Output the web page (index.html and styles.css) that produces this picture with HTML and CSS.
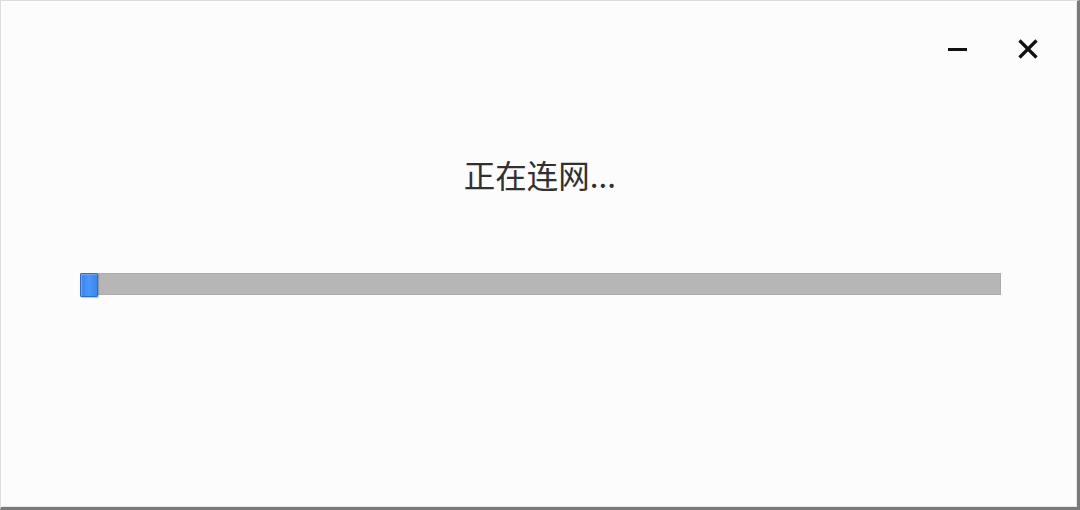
FILE: index.html
```html
<!DOCTYPE html>
<html lang="zh-CN">
<head>
<meta charset="utf-8">
<link rel="stylesheet" href="styles.css">
</head>
<body>
<div class="window">
  <div class="titlebar">
    <button class="tb-btn" aria-label="最小化">
      <svg width="22" height="22" viewBox="0 0 22 22"><path d="M2 11.5H21" stroke="#111" stroke-width="3"/></svg>
    </button>
    <button class="tb-btn" aria-label="关闭">
      <svg width="22" height="22" viewBox="0 0 22 22"><path d="M2.5 2.5L19.5 19.5M19.5 2.5L2.5 19.5" stroke="#111" stroke-width="3.2"/></svg>
    </button>
  </div>
  <div class="status">正在连网...</div>
  <div class="progress">
    <div class="chunk"></div>
  </div>
</div>
</body>
</html>
```
FILE: styles.css
```css
html, body {
  margin: 0;
  padding: 0;
  background: #fcfcfc;
}
.window {
  box-sizing: border-box;
  width: 1080px;
  height: 510px;
  background: #fcfcfc;
  border-top: 1px solid #dcdcdc;
  border-left: 1px solid #dcdcdc;
  border-right: 3px solid #7a7a7a;
  border-bottom: 3px solid #7a7a7a;
  box-shadow: inset 1px 1px 0 #ffffff, inset -1px -1px 0 #e6e6e6;
  display: flex;
  flex-direction: column;
  font-family: "Noto Sans CJK SC", "Microsoft YaHei", sans-serif;
}
.titlebar {
  display: flex;
  justify-content: flex-end;
  gap: 37px;
  padding: 37px 32px 0 0;
  height: 23px;
}
.tb-btn {
  width: 34px;
  height: 22px;
  padding: 0;
  border: 0;
  background: transparent;
  display: flex;
  align-items: center;
  justify-content: center;
}
.status {
  margin-top: 93px;
  text-align: center;
  font-size: 31.5px;
  line-height: 40px;
  color: #303030;
  padding-left: 2px;
}
.progress {
  margin: 79px 0 0 80px;
  width: 920px;
  height: 22px;
  box-sizing: border-box;
  background: #b6b6b6;
  border: 1px solid #acacac;
  position: relative;
}
.chunk {
  position: absolute;
  left: -2px;
  top: -1px;
  width: 18px;
  height: 24px;
  box-sizing: border-box;
  background: linear-gradient(to right, #3a86ee, #4a98fa 50%, #3a86ee);
  border: 1px solid #2a6cd0;
  box-shadow: inset 1px 1px 0 #6aa8f8, 1px 1px 1px rgba(0,0,0,0.2);
  border-radius: 1px;
}
```
